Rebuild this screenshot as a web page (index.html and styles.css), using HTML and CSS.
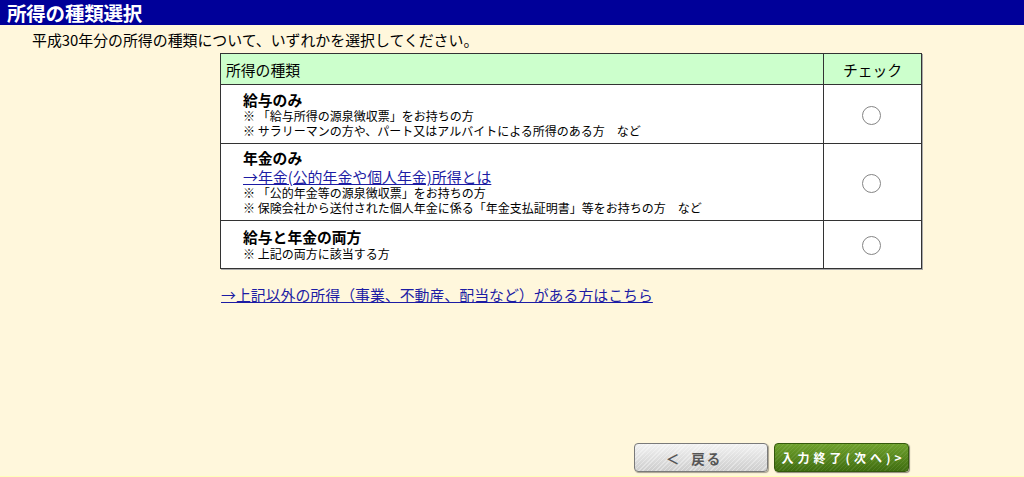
FILE: index.html
```html
<!DOCTYPE html>
<html lang="ja">
<head>
<meta charset="utf-8">
<title>所得の種類選択</title>
<link rel="stylesheet" href="styles.css">
</head>
<body>
<div class="page">
  <header class="title-bar">所得の種類選択</header>
  <p class="lead">平成30年分の所得の種類について、いずれかを選択してください。</p>
  <div class="main">
    <table class="kinds">
      <thead>
        <tr>
          <th class="col-kind">所得の種類</th>
          <th class="col-check">チェック</th>
        </tr>
      </thead>
      <tbody>
        <tr>
          <td class="kind">
            <div class="kind-title">給与のみ</div>
            <div class="note">※ 「給与所得の源泉徴収票」をお持ちの方</div>
            <div class="note">※ サラリーマンの方や、パート又はアルバイトによる所得のある方　など</div>
          </td>
          <td class="check"><span class="radio"></span></td>
        </tr>
        <tr>
          <td class="kind kind-tight">
            <div class="kind-title">年金のみ</div>
            <div class="kind-link"><a href="#">→年金(公的年金や個人年金)所得とは</a></div>
            <div class="note">※ 「公的年金等の源泉徴収票」をお持ちの方</div>
            <div class="note">※ 保険会社から送付された個人年金に係る「年金支払証明書」等をお持ちの方　など</div>
          </td>
          <td class="check"><span class="radio"></span></td>
        </tr>
        <tr>
          <td class="kind kind-last">
            <div class="kind-title">給与と年金の両方</div>
            <div class="note">※ 上記の両方に該当する方</div>
          </td>
          <td class="check"><span class="radio"></span></td>
        </tr>
      </tbody>
    </table>
    <p class="other"><a href="#">→上記以外の所得（事業、不動産、配当など）がある方はこちら</a></p>
  </div>
  <div class="actions">
    <button class="btn btn-back" type="button">＜&nbsp;&nbsp;戻る</button>
    <button class="btn btn-next" type="button">入力終了(次へ)&gt;</button>
  </div>
  <div class="foot-strip"></div>
</div>
</body>
</html>
```

FILE: styles.css
```css
html, body {
  margin: 0;
  padding: 0;
}

body {
  background: #fff7dc;
  font-family: "Noto Sans CJK JP", "Noto Sans", sans-serif;
  color: #000;
}

.page {
  height: 477px;
  display: flex;
  flex-direction: column;
  overflow: hidden;
}

.title-bar {
  height: 25px;
  line-height: 25px;
  background: #000099;
  color: #fff;
  font-weight: bold;
  font-size: 19.5px;
  padding-left: 7px;
  letter-spacing: -0.2px;
}

.lead {
  margin: 5px 0 0 32px;
  font-size: 14.9px;
  line-height: 20px;
}

.main {
  margin-left: 220px;
  margin-top: 3px;
  width: 702px;
}

.kinds {
  width: 702px;
  border-collapse: collapse;
  background: #fff;
  border: 1px solid #333;
  box-shadow: 1px 1px 0 #aaa;
}

.kinds th {
  background: #ccffcc;
  font-weight: normal;
  font-size: 14.8px;
  height: 30px;
  padding: 0;
  border: 1px solid #333;
}

.col-kind {
  text-align: left;
  padding-left: 5px !important;
}

.col-check {
  width: 97px;
  text-align: center;
}

.kinds td {
  border: 1px solid #333;
  vertical-align: top;
}

.kind {
  padding: 6px 0 5px 22px;
}

.kind-tight {
  padding-top: 5px;
}

.kind-last {
  padding-bottom: 6px;
}

.kind-title {
  font-weight: bold;
  font-size: 14.8px;
  line-height: 18px;
}

.kind-last .kind-title {
  line-height: 20px;
}

.kind-link {
  font-size: 14.9px;
  line-height: 19px;
}

.kind-link a,
.other a {
  color: #1c1ca4;
  text-decoration: underline;
}

.note {
  font-size: 12px;
  line-height: 14.5px;
}

.check {
  text-align: center;
  vertical-align: middle !important;
}

.radio {
  display: inline-block;
  width: 17px;
  height: 17px;
  border: 1px solid #858585;
  border-radius: 50%;
  background: #fff;
  vertical-align: middle;
  margin-right: 2px;
  position: relative;
  top: -1px;
}

.other {
  margin: 16px 0 0 1px;
  font-size: 14.9px;
  line-height: 20px;
}

.actions {
  margin-top: auto;
  margin-bottom: 4px;
  margin-left: 634px;
  display: flex;
  gap: 6px;
}

.btn {
  height: 29px;
  border-radius: 4px;
  font-family: "Noto Sans CJK JP", sans-serif;
  font-weight: bold;
  padding: 0;
  cursor: pointer;
}

.btn-back {
  width: 134px;
  border: 1px solid #7a7a7a;
  color: #555;
  font-size: 13.5px;
  letter-spacing: 2px;
  padding-right: 14px;
  background:
    repeating-linear-gradient(135deg, rgba(255,255,255,0.35) 0 1px, rgba(255,255,255,0) 1px 3px),
    linear-gradient(#f2f2f2, #cdcdcd);
  box-shadow: 1px 1px 1px rgba(0,0,0,0.35);
}

.btn-next {
  width: 135px;
  border: 1px solid #34590c;
  color: #fff;
  font-size: 12px;
  letter-spacing: 4px;
  padding-left: 4px;
  background:
    repeating-linear-gradient(135deg, rgba(255,255,255,0.08) 0 1px, rgba(255,255,255,0) 1px 3px),
    linear-gradient(#6fa12c, #3f6d10);
  box-shadow: 1px 1px 1px rgba(0,0,0,0.45);
}

.foot-strip {
  height: 1px;
  background: #ffffb8;
}
```
